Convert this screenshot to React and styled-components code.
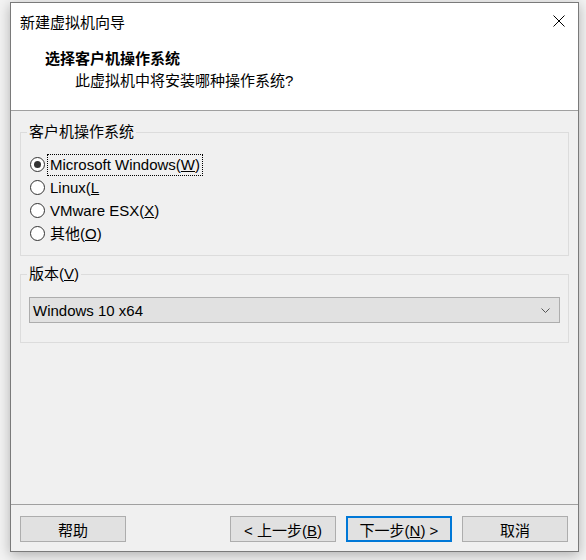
import React from 'react';
import styled, { createGlobalStyle } from 'styled-components';

const GlobalStyle = createGlobalStyle`
  body {
    margin: 0;
    background: #f3f3f3;
    font-family: "Liberation Sans", "Noto Sans CJK SC", sans-serif;
    color: #000;
  }
`;

const Page = styled.div`
  height: 560px;
  box-sizing: border-box;
  padding: 2px 0 0 10px;
  overflow: hidden;
`;

const Dialog = styled.div`
  width: 569px;
  height: 550px;
  box-sizing: border-box;
  border: 1px solid #7a7a7a;
  background: #f0f0f0;
  display: flex;
  flex-direction: column;
  box-shadow: 0 3px 12px rgba(0, 0, 0, 0.28);
`;

const Header = styled.div`
  background: #fff;
  height: 108px;
  box-sizing: border-box;
  border-bottom: 1px solid #a0a0a0;
`;

const TitleBar = styled.div`
  height: 36px;
  display: flex;
  align-items: center;
  justify-content: space-between;
  padding: 0 13px 0 9px;
  font-size: 15px;
`;

const HeaderText = styled.div`
  margin-top: 9px;
  padding-left: 34px;
`;

const Heading = styled.div`
  font-size: 15px;
  font-weight: bold;
  line-height: 22px;
`;

const SubHeading = styled.div`
  font-size: 15px;
  line-height: 22px;
  padding-left: 30px;
`;

const Body = styled.div`
  flex: 1;
  padding: 11px 9px 0;
  display: flex;
  flex-direction: column;
  gap: 8px;
`;

const Group = styled.fieldset`
  margin: 0;
  min-width: 0;
  border: 1px solid #dcdcdc;
  padding: ${(p) => p.$py} 0;
`;

const Legend = styled.legend`
  margin-left: 6px;
  padding: 0 2px;
  font-size: 15px;
  line-height: 20px;
`;

const RadioList = styled.div`
  display: flex;
  flex-direction: column;
  padding-left: 9px;
`;

const RadioRow = styled.label`
  height: 23px;
  display: flex;
  align-items: center;
  font-size: 15px;
`;

const RadioCircle = styled.span`
  width: 15px;
  height: 15px;
  box-sizing: border-box;
  border: 1px solid #333;
  border-radius: 50%;
  background: #fff;
  display: flex;
  align-items: center;
  justify-content: center;

  &::after {
    content: '';
    width: 7px;
    height: 7px;
    border-radius: 50%;
    background: ${(p) => (p.$checked ? '#333' : 'transparent')};
  }
`;

const RadioText = styled.span`
  margin-left: 3px;
  padding: 0 2px;
  line-height: 20px;
  outline: ${(p) => (p.$focused ? '1px dotted #000' : 'none')};
`;

const SelectWrap = styled.div`
  padding: 0 8px;
`;

const Select = styled.div`
  height: 26px;
  box-sizing: border-box;
  border: 1px solid #adadad;
  background: #e1e1e1;
  display: flex;
  align-items: center;
  justify-content: space-between;
  padding: 0 9px 0 3px;
  font-size: 15px;
`;

const Footer = styled.div`
  border-top: 1px solid #a0a0a0;
  padding: 11px 10px 9px 9px;
  display: flex;
  gap: 10px;
`;

const Button = styled.button`
  width: 106px;
  height: 26px;
  box-sizing: border-box;
  padding: 0;
  background: #e1e1e1;
  border: ${(p) => (p.$primary ? '2px solid #0078d7' : '1px solid #adadad')};
  font-family: inherit;
  font-size: 15px;
  color: #000;
  margin-right: ${(p) => (p.$push ? 'auto' : '0')};
`;

const CloseIcon = () => (
  <svg width="12" height="12" viewBox="0 0 12 12">
    <path d="M0.5 0.5 L11.5 11.5 M11.5 0.5 L0.5 11.5" stroke="#000" strokeWidth="1" />
  </svg>
);

const Chevron = () => (
  <svg width="9" height="5" viewBox="0 0 9 5">
    <path d="M0.5 0.5 L4.5 4.5 L8.5 0.5" stroke="#555" strokeWidth="1" fill="none" />
  </svg>
);

const options = [
  { pre: 'Microsoft Windows(', key: 'W', post: ')', checked: true },
  { pre: 'Linux(', key: 'L', post: '' },
  { pre: 'VMware ESX(', key: 'X', post: ')' },
  { pre: '其他(', key: 'O', post: ')' },
];

export default function App() {
  return (
    <Page>
      <GlobalStyle />
      <Dialog>
        <Header>
          <TitleBar>
            <span>新建虚拟机向导</span>
            <CloseIcon />
          </TitleBar>
          <HeaderText>
            <Heading>选择客户机操作系统</Heading>
            <SubHeading>此虚拟机中将安装哪种操作系统?</SubHeading>
          </HeaderText>
        </Header>

        <Body>
          <Group $py="11px 0 10px">
            <Legend>客户机操作系统</Legend>
            <RadioList>
              {options.map((o) => (
                <RadioRow key={o.key}>
                  <RadioCircle $checked={o.checked} />
                  <RadioText $focused={o.checked}>
                    {o.pre}
                    <u>{o.key}</u>
                    {o.post}
                  </RadioText>
                </RadioRow>
              ))}
            </RadioList>
          </Group>

          <Group $py="13px 0 19px">
            <Legend>
              版本(<u>V</u>)
            </Legend>
            <SelectWrap>
              <Select>
                <span>Windows 10 x64</span>
                <Chevron />
              </Select>
            </SelectWrap>
          </Group>
        </Body>

        <Footer>
          <Button $push>帮助</Button>
          <Button>
            &lt; 上一步(<u>B</u>)
          </Button>
          <Button $primary>
            下一步(<u>N</u>) &gt;
          </Button>
          <Button>取消</Button>
        </Footer>
      </Dialog>
    </Page>
  );
}
